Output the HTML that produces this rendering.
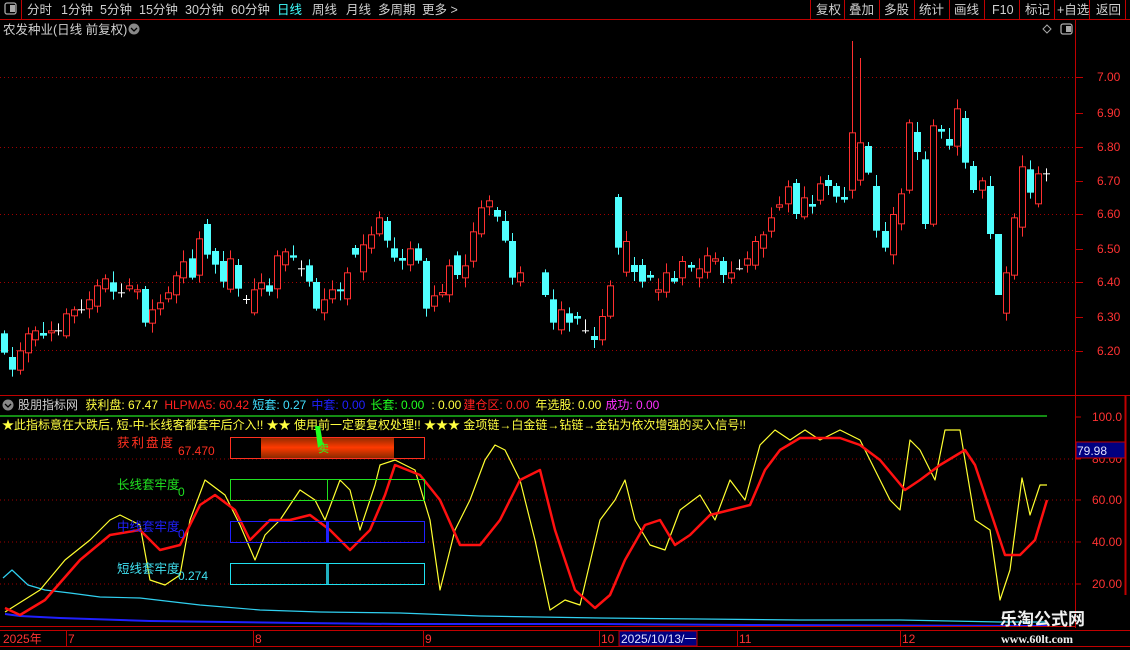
<!DOCTYPE html>
<html><head><meta charset="utf-8">
<style>
html,body{margin:0;padding:0;background:#000;width:1130px;height:650px;overflow:hidden}
svg{display:block;font-family:"Liberation Sans","Noto Sans CJK SC",sans-serif}
</style></head><body>
<svg id="s" width="1130" height="650" viewBox="0 0 1130 650" xmlns="http://www.w3.org/2000/svg">
<rect width="1130" height="650" fill="#000"/>
<!-- top bar -->
<line x1="0" y1="19.5" x2="1130" y2="19.5" stroke="#c00000"/>
<line x1="21.5" y1="0" x2="21.5" y2="19" stroke="#c00000"/>
<rect x="5" y="3" width="11" height="11" rx="2" fill="none" stroke="#aaa" stroke-width="1.3"/>
<rect x="10" y="5" width="5" height="7" fill="#aaa"/>
<g font-size="12.5" fill="#d0d0d0">
<text x="27" y="14">分时</text><text x="61" y="14">1分钟</text><text x="100" y="14">5分钟</text><text x="139" y="14">15分钟</text><text x="185" y="14">30分钟</text><text x="231" y="14">60分钟</text>
<text x="277" y="14" fill="#40ffff">日线</text><text x="312" y="14">周线</text><text x="346" y="14">月线</text><text x="378" y="14">多周期</text><text x="422" y="14">更多 &gt;</text>
<text x="816" y="14">复权</text><text x="849" y="14">叠加</text><text x="884" y="14">多股</text><text x="919" y="14">统计</text><text x="954" y="14">画线</text><text x="992" y="14">F10</text><text x="1025" y="14">标记</text><text x="1057" y="14">+自选</text><text x="1096" y="14">返回</text>
</g>
<g stroke="#c00000"><line x1="810.5" y1="0" x2="810.5" y2="19"/><line x1="844.5" y1="0" x2="844.5" y2="19"/><line x1="879.5" y1="0" x2="879.5" y2="19"/><line x1="914.5" y1="0" x2="914.5" y2="19"/><line x1="949.5" y1="0" x2="949.5" y2="19"/><line x1="984.5" y1="0" x2="984.5" y2="19"/><line x1="1019.5" y1="0" x2="1019.5" y2="19"/><line x1="1054.5" y1="0" x2="1054.5" y2="19"/><line x1="1089.5" y1="0" x2="1089.5" y2="19"/><line x1="1125.5" y1="0" x2="1125.5" y2="19"/></g>
<text x="3" y="34" font-size="12.5" fill="#d0d0d0">农发种业(日线 前复权)</text>
<circle cx="134" cy="29" r="5.5" fill="#888"/><path d="M131 28l3 3 3-3" stroke="#000" fill="none" stroke-width="1.3"/>
<path d="M1047 25l4 4-4 4-4-4z" fill="none" stroke="#aaa"/>
<rect x="1061" y="24" width="11" height="10" rx="2" fill="none" stroke="#aaa" stroke-width="1.3"/><rect x="1066" y="26" width="5" height="6" fill="#aaa"/>
<!-- axes -->
<line x1="1075.5" y1="20" x2="1075.5" y2="628" stroke="#c00000"/>
<line x1="0" y1="395.5" x2="1130" y2="395.5" stroke="#c00000"/>
<g id="grid" stroke="#a00000" stroke-dasharray="1 3"></g>
<g font-size="12" fill="#ff3232" id="plabels"></g>
<g id="candles"></g>
<!-- indicator -->
<circle cx="8" cy="405" r="5.5" fill="#888"/><path d="M5 404l3 3 3-3" stroke="#000" fill="none" stroke-width="1.3"/>
<text y="409" font-size="12">
<tspan x="18" fill="#d0d0d0">股朋指标网</tspan><tspan x="82" fill="#ffff40"> 获利盘: 67.47</tspan><tspan x="161" fill="#ff2020"> HLPMA5: 60.42</tspan><tspan x="249" fill="#40e0ff"> 短套: 0.27</tspan><tspan x="308" fill="#2020ff"> 中套: 0.00</tspan><tspan x="367" fill="#20ff20"> 长套: 0.00</tspan><tspan x="428" fill="#ffff40"> : 0.00</tspan><tspan x="460" fill="#ff2020"> 建仓区: 0.00</tspan><tspan x="532" fill="#ffff40"> 年选股: 0.00</tspan><tspan x="602" fill="#ff30ff"> 成功: 0.00</tspan>
</text>
<line x1="0" y1="416" x2="1047" y2="416" stroke="#20e020" stroke-width="1.2"/>
<text x="2" y="429" font-size="12" fill="#ffff40">★此指标意在大跌后, 短-中-长线客都套牢后介入!! ★★ 使用前一定要复权处理!! ★★★ 金项链→白金链→钻链→金钻为依次增强的买入信号!!</text>
<g stroke="#a00000" stroke-dasharray="1 3">
<line x1="0" y1="459" x2="1075" y2="459"/><line x1="0" y1="500" x2="1075" y2="500"/><line x1="0" y1="542" x2="1075" y2="542"/><line x1="0" y1="584" x2="1075" y2="584"/>
</g>
<g id="lines"></g>
<!-- boxes -->
<defs><linearGradient id="og" x1="0" y1="0" x2="0" y2="1"><stop offset="0" stop-color="#8a2a00"/><stop offset="0.5" stop-color="#ff3a00"/><stop offset="1" stop-color="#8a2a00"/></linearGradient></defs>
<rect x="261" y="437" width="133" height="21" fill="url(#og)"/>
<rect x="230.5" y="437.5" width="194" height="21" fill="none" stroke="#ff3020"/>
<path d="M315 426 L320 426 L323 444 L318 448 Z" fill="#20ff20"/>
<text x="318" y="452" font-size="11" fill="#20ff20">卖</text>
<rect x="230.5" y="479.5" width="194" height="21" fill="none" stroke="#20e020"/><line x1="327.5" y1="480" x2="327.5" y2="500" stroke="#20e020"/>
<rect x="230.5" y="521.5" width="194" height="21" fill="none" stroke="#2020ff"/><rect x="326" y="522" width="3" height="20" fill="#2020ff"/>
<rect x="230.5" y="563.5" width="194" height="21" fill="none" stroke="#20e0f0"/><rect x="326" y="564" width="3" height="20" fill="#20b0c0"/>
<g font-size="12.5">
<text x="117" y="447" fill="#ff3020" letter-spacing="2">获利盘度</text><text x="178" y="455" fill="#ff3020" font-size="12">67.470</text>
<text x="117" y="489" fill="#20e020">长线套牢度</text><text x="178" y="496" fill="#20e020" font-size="12">0</text>
<text x="117" y="531" fill="#2020ff">中线套牢度</text><text x="178" y="538" fill="#2020ff" font-size="12">0</text>
<text x="117" y="573" fill="#40e0f0">短线套牢度</text><text x="178" y="580" fill="#40e0f0" font-size="12">0.274</text>
</g>
<g font-size="12" fill="#ff3232">
<text x="1092" y="421">100.0</text><text x="1092" y="463">80.00</text><text x="1092" y="504">60.00</text><text x="1092" y="546">40.00</text><text x="1092" y="588">20.00</text>
</g>
<g stroke="#c00000"><line x1="1075" y1="417" x2="1081" y2="417"/><line x1="1075" y1="459" x2="1081" y2="459"/><line x1="1075" y1="500" x2="1081" y2="500"/><line x1="1075" y1="542" x2="1081" y2="542"/><line x1="1075" y1="584" x2="1081" y2="584"/></g>
<line x1="1125.5" y1="396" x2="1125.5" y2="595" stroke="#c00000" stroke-width="2"/>
<rect x="1076" y="442" width="49" height="16" fill="#000080" stroke="#c00000"/>
<text x="1077" y="455" font-size="12" fill="#e0e0ff">79.98</text>
<!-- date axis -->
<line x1="0" y1="626.5" x2="1075" y2="626.5" stroke="#c00000"/>
<line x1="0" y1="630.5" x2="1130" y2="630.5" stroke="#c00000"/>
<line x1="0" y1="646.5" x2="1130" y2="646.5" stroke="#c00000"/>
<g stroke="#c00000"><line x1="66.5" y1="631" x2="66.5" y2="646"/><line x1="253.5" y1="631" x2="253.5" y2="646"/><line x1="423.5" y1="631" x2="423.5" y2="646"/><line x1="599.5" y1="631" x2="599.5" y2="646"/><line x1="737.5" y1="631" x2="737.5" y2="646"/><line x1="900.5" y1="631" x2="900.5" y2="646"/></g>
<g font-size="12" fill="#ff3232"><text x="3" y="643">2025年</text><text x="68" y="643">7</text><text x="255" y="643">8</text><text x="425" y="643">9</text><text x="601" y="643">10</text><text x="739" y="643">11</text><text x="902" y="643">12</text></g>
<rect x="619" y="631" width="78" height="15" fill="#000080" stroke="#c00000"/>
<text x="621" y="643" font-size="12" fill="#e0e0ff">2025/10/13/一</text>
<text x="1000" y="625" font-size="17" font-weight="bold" fill="#f0f0f0">乐淘公式网</text>
<text x="1001" y="643" font-size="12" font-weight="bold" fill="#f0f0f0" font-family="Liberation Serif,serif">www.60lt.com</text>
</svg>
<script>
var NS="http://www.w3.org/2000/svg";
function el(p,t,a){var e=document.createElementNS(NS,t);for(var k in a)e.setAttribute(k,a[k]);p.appendChild(e);return e}
var g=document.getElementById('grid'),pl=document.getElementById('plabels');
[77,147,214,282,350].forEach(function(y){el(g,'line',{x1:0,y1:y+.5,x2:1075,y2:y+.5})});
var lab=[[77,'7.00'],[113,'6.90'],[147,'6.80'],[181,'6.70'],[214,'6.60'],[249,'6.50'],[282,'6.40'],[317,'6.30'],[351,'6.20']];
lab.forEach(function(l){var t=el(pl,'text',{x:1097,y:l[0]+4});t.textContent=l[1];el(document.getElementById('s'),'line',{x1:1075,y1:l[0]+.5,x2:1083,y2:l[0]+.5,stroke:'#c00000'})});
// candles: x, top, bottom (zoom coords), type c=cyan r=red w=white
var A=[[4,460,518,'c'],[12,531,569,'c'],[20,511,572,'r'],[28,460,520,'r'],[35,451,481,'r'],[43,459,467,'c'],[51,451,460,'r'],[58,451,451,'w'],[66,400,469,'r'],[74,388,409,'r'],[81,388,388,'w'],[89,358,388,'r'],[97,316,380,'r'],[105,295,328,'r'],[113,307,335,'c'],[121,337,337,'w'],[129,316,328,'r'],[137,328,337,'r'],[145,327,428,'c'],[152,388,431,'r'],[160,367,388,'r'],[168,337,358,'r'],[176,286,346,'r'],[183,244,295,'r'],[192,235,293,'c'],[199,175,287,'r'],[207,132,224,'c'],[215,213,254,'c'],[223,243,305,'c'],[230,235,329,'r'],[238,255,326,'c'],[246,357,357,'w'],[254,328,400,'r'],[261,307,328,'r'],[269,316,335,'c'],[277,226,328,'r'],[285,214,256,'r'],[293,226,233,'c'],[301,265,265,'w'],[309,256,305,'c'],[316,306,386,'c'],[324,358,400,'r'],[332,328,358,'r'],[340,328,334,'c'],[347,277,358,'r'],[355,204,224,'c'],[363,193,277,'r'],[371,163,206,'r'],[379,112,163,'r'],[387,123,182,'c'],[394,205,233,'c'],[402,234,242,'c'],[410,205,256,'r'],[418,205,242,'c'],[426,243,386,'c'],[434,346,380,'r'],[442,336,346,'r'],[449,256,346,'r'],[457,226,285,'c'],[465,256,295,'r'],[473,154,245,'r'],[481,82,163,'r'],[489,61,82,'r'],[497,90,110,'c'],[505,123,182,'c'],[512,183,293,'c'],[520,277,307,'r']];
var B=[[545,727,795,'c'],[553,808,878,'c'],[561,838,901,'r'],[569,850,878,'c'],[577,858,866,'c'],[585,901,901,'w'],[594,918,930,'c'],[602,858,931,'r'],[610,766,860,'r'],[618,501,653,'c'],[626,633,728,'r'],[634,705,726,'c'],[642,705,755,'c'],[650,735,743,'c'],[658,778,788,'r'],[666,727,788,'r'],[674,744,755,'c'],[682,693,745,'r'],[691,705,713,'c'],[699,715,745,'r'],[707,676,728,'r'],[715,685,695,'r'],[723,693,735,'c'],[731,727,746,'r'],[739,715,715,'w'],[747,685,707,'r'],[755,633,707,'r'],[763,613,656,'r'],[771,562,605,'r'],[779,523,533,'r'],[788,469,523,'r'],[796,459,552,'c'],[804,502,562,'r'],[812,522,530,'c'],[820,460,512,'r'],[828,450,468,'c'],[836,468,500,'c'],[844,501,509,'c'],[852,307,482,'r',33],[860,337,452,'r',84],[868,348,428,'c'],[876,468,602,'c'],[885,603,653,'c'],[893,552,676,'r'],[901,490,583,'r'],[909,277,482,'r'],[917,306,366,'c'],[925,388,582,'c'],[933,286,584,'r'],[941,297,305,'c'],[949,327,347,'c'],[957,235,350,'r'],[965,264,398,'c'],[973,408,480,'c'],[982,451,482,'r'],[990,468,612,'c'],[998,612,795,'c',918],[1006,727,851,'r'],[1014,562,737,'r'],[1022,409,593,'r'],[1030,418,488,'c'],[1038,430,523,'r'],[1046,430,430,'w']];
var cg=document.getElementById('candles');
function draw(list,off){list.forEach(function(c,i){var x=c[0],t=c[1]/3+off,b=c[2]/3+off;
 var col=c[3]=='c'?'#50ffff':c[3]=='r'?'#ff3030':'#ffffff';
 var wt=t-(3+(i*7)%9),wb=b+(2+(i*5)%8);if(c[4])wt=c[4]/3+off;if(c[3]=='c'&&c[4])wb=c[4]/3+off;
 el(cg,'line',{x1:x+.5,y1:wt,x2:x+.5,y2:wb,stroke:col});
 if(c[3]=='w'){el(cg,'line',{x1:x-3,y1:t+.5,x2:x+4,y2:t+.5,stroke:col});return}
 var h=Math.max(b-t,2);
 if(c[3]=='c')el(cg,'rect',{x:x-3,y:t,width:7,height:h,fill:col});
 else el(cg,'rect',{x:x-2.5,y:t+.5,width:6,height:h-1,fill:'#000',stroke:col});
});}
draw(A,180);draw(B,30);
var L=document.getElementById('lines');
function pl2(pts,col,w){el(L,'polyline',{points:pts.map(function(p){return p.join(',')}).join(' '),fill:'none',stroke:col,'stroke-width':w,'stroke-linejoin':'round'})}
pl2([[5,614],[20,616],[60,618],[150,621],[300,623],[400,624],[600,624],[750,625],[1047,626]],'#2020ff',2);
pl2([[3,578],[12,570],[28,585],[45,590],[70,593],[100,597],[140,598],[200,605],[260,610],[320,612],[400,613],[480,616],[600,618],[700,619],[800,620],[900,620],[1000,622],[1047,622]],'#30d0f0',1.2);
pl2([[5,612],[40,590],[65,560],[90,540],[110,520],[120,515],[140,525],[150,580],[165,585],[180,575],[190,520],[205,480],[225,495],[240,525],[255,560],[265,535],[280,520],[300,490],[315,500],[325,520],[340,480],[350,490],[360,530],[375,485],[380,465],[395,460],[415,470],[430,520],[440,590],[455,530],[470,500],[485,460],[495,445],[505,450],[520,480],[535,540],[550,610],[565,600],[580,605],[600,520],[615,500],[625,480],[635,520],[650,545],[665,550],[680,510],[700,495],[715,520],[730,480],[745,500],[760,445],[775,430],[790,440],[805,430],[820,440],[840,430],[860,440],[875,470],[890,500],[900,510],[910,440],[920,450],[935,480],[945,430],[960,430],[975,520],[990,530],[1000,600],[1010,570],[1022,478],[1030,515],[1040,485],[1047,485]],'#ffff30',1.2);
pl2([[5,608],[20,615],[45,600],[80,560],[110,535],[140,530],[160,550],[180,545],[200,505],[215,495],[235,510],[250,540],[270,520],[290,520],[310,515],[330,530],[350,550],[370,530],[385,495],[395,465],[420,475],[440,500],[460,545],[480,545],[500,520],[520,480],[540,470],[555,530],[575,590],[595,608],[610,595],[625,560],[645,525],[660,520],[675,545],[690,535],[710,515],[730,510],[750,505],[765,470],[780,450],[800,438],[840,438],[860,445],[880,460],[905,490],[920,480],[940,465],[965,450],[975,465],[990,510],[1005,555],[1020,555],[1035,540],[1047,500]],'#ff1010',2.5);
</script>
</body></html>
